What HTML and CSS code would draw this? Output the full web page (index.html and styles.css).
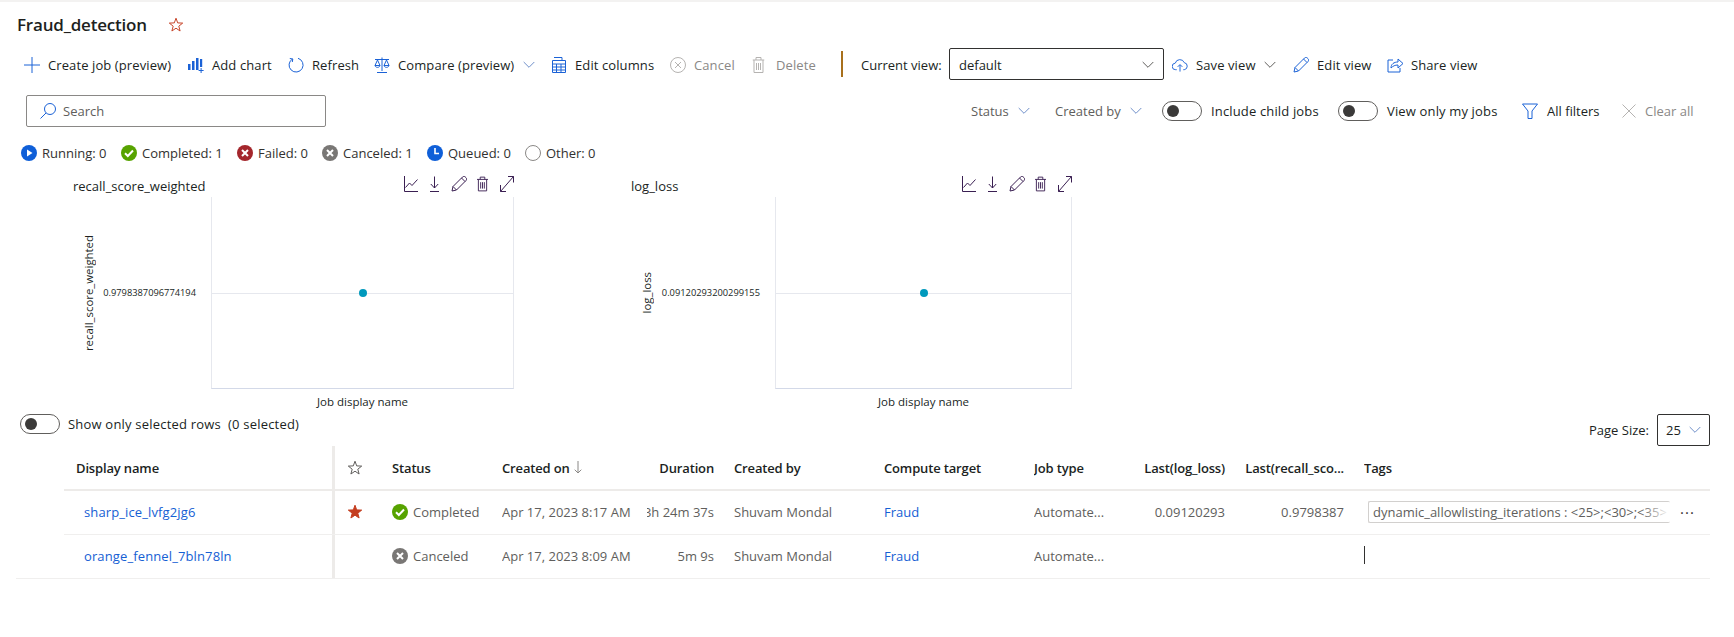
FILE: index.html
```html
<!DOCTYPE html>
<html lang="en">
<head>
<meta charset="utf-8">
<title>Fraud_detection</title>
<link rel="stylesheet" href="styles.css">
</head>
<body>
<svg class="defs" xmlns="http://www.w3.org/2000/svg">
  <symbol id="star" viewBox="0 0 16 16"><path d="M8 1.200l1.700 4.700 5 .2-3.900 3.100 1.300 4.800L8 11.200 3.900 14l1.300-4.800L1.300 6.100l5-.2z"/></symbol>
  <symbol id="chev" viewBox="0 0 12 8"><path d="M.7 1l5.300 5.300L11.300 1"/></symbol>
  <symbol id="i-line" viewBox="0 0 14 16"><path d="M.5 0v15.500H14"/><path d="M1.500 11.500l4-4.500 2.500 2.500 5.500-6"/></symbol>
  <symbol id="i-down" viewBox="0 0 9 16"><path d="M4.500 .5v11.500M.8 8L4.500 12 8.200 8M0 15.500h9"/></symbol>
  <symbol id="i-pencil" viewBox="0 0 16 16"><path d="M1 15l1-4.500L11.500 1c.8-.8 2-.8 2.800 0l.7.7c.8.8.8 2 0 2.800L5.500 14z"/><path d="M2 10.500L5.500 14M10.500 2l3.500 3.500"/></symbol>
  <symbol id="i-trash" viewBox="0 0 12 16"><path d="M0 3h12M3.500 3V.5h5V3M1.500 3v12.500h9V3M4 6v7M6 6v7M8 6v7"/></symbol>
  <symbol id="i-expand" viewBox="0 0 14 16"><path d="M.5 15.500l13-15M8 .5h5.500v6M.5 9v6.500H6"/></symbol>
</svg>

<div class="page">
  <header class="title-row">
    <h1 class="title">Fraud_detection</h1>
    <svg class="title-star"><use href="#star"/></svg>
  </header>

  <div class="toolbar">
    <button class="tb"><svg class="ic blue" viewBox="0 0 16 16"><path d="M8 0v16M0 8h16"/></svg>Create job (preview)</button>
    <button class="tb"><svg class="ic solid" viewBox="0 0 16 16"><path d="M0 7h2.500v6H0zM4 4h2.500v9H4zM8 1h2.500v12H8zM12 2h2.200v8H12z"/><path d="M12.600 11h1v2h2v1h-2v2h-1v-2h-2v-1h2z"/></svg>Add chart</button>
    <button class="tb"><svg class="ic blue" viewBox="0 0 16 16"><path d="M4.500 2A7 7 0 1 0 10 1.300"/><path d="M1.800 1.500L4.800 2l-.5 3"/></svg>Refresh</button>
    <button class="tb tb-menu"><svg class="ic blue" viewBox="0 0 16 16"><path d="M1 2.500h14M8 .5v13.500M3 15.500h10M3.500 3L1 8.500h5zM12.500 3L10 8.500h5zM1 8.500c.5 2.500 4.500 2.500 5 0M10 8.500c.5 2.500 4.500 2.500 5 0"/></svg>Compare (preview)<svg class="chev"><use href="#chev"/></svg></button>
    <button class="tb"><svg class="ic blue" viewBox="0 0 16 16"><path d="M1.500 3.500h13v12h-13zM1.500 7h13M1.500 10h13M1.500 13h13M5.500 7v8.500M10 7v8.500M3 .5h8v3"/></svg>Edit columns</button>
    <button class="tb off"><svg class="ic grey" viewBox="0 0 16 16"><circle cx="8" cy="8" r="7.500"/><path d="M5 5l6 6M11 5l-6 6"/></svg>Cancel</button>
    <button class="tb off"><svg class="ic grey narrow-ic" viewBox="0 0 12 16"><use href="#i-trash"/></svg>Delete</button>
    <span class="sep"></span>
    <label class="cv-label">Current view:</label>
    <div class="select view-select"><span>default</span><svg class="chev dark"><use href="#chev"/></svg></div>
    <button class="tb tb-save"><svg class="ic blue" viewBox="0 0 17 16"><path d="M5 13H4a3.500 3.500 0 0 1-.5-7A5 5 0 0 1 13 5.500 3.800 3.800 0 0 1 13 13h-1"/><path d="M8.500 15V8M6 10l2.500-2.500L11 10"/></svg>Save view<svg class="chev dark"><use href="#chev"/></svg></button>
    <button class="tb"><svg class="ic blue" viewBox="0 0 16 16"><use href="#i-pencil"/></svg>Edit view</button>
    <button class="tb"><svg class="ic blue" viewBox="0 0 16 16"><path d="M6 3H1v12h12v-4"/><path d="M4 11c0-4 3-6 7-6V2l5 4.500L11 11V8c-3 0-5 1-7 3z"/></svg>Share view</button>
  </div>

  <div class="filter-row">
    <div class="search">
      <svg class="ic blue" viewBox="0 0 16 16"><circle cx="10" cy="6" r="5.500"/><path d="M6 10l-5.500 5.500"/></svg>
      <span>Search</span>
    </div>
    <div class="filters">
      <span class="flt">Status<svg class="chev"><use href="#chev"/></svg></span>
      <span class="flt">Created by<svg class="chev"><use href="#chev"/></svg></span>
      <span class="tog-wrap"><span class="toggle"><i></i></span>Include child jobs</span>
      <span class="tog-wrap"><span class="toggle"><i></i></span>View only my jobs</span>
      <span class="flt"><svg class="ic blue" viewBox="0 0 16 16"><path d="M.5 1h15L10 8v7.500H6V8z"/></svg>All filters</span>
      <span class="flt off"><svg class="ic grey" viewBox="0 0 16 16"><path d="M1.500 1.500l13 13M14.500 1.500l-13 13"/></svg>Clear all</span>
    </div>
  </div>

  <div class="status-row">
    <span class="st"><svg class="si" viewBox="0 0 16 16"><circle cx="8" cy="8" r="8" fill="#0f5fd8"/><path d="M6 4.500v7L11.500 8z" fill="#fff"/></svg>Running: 0</span>
    <span class="st"><svg class="si" viewBox="0 0 16 16"><circle cx="8" cy="8" r="8" fill="#57a300"/><path d="M4 8.300l2.800 2.700L12 5.500" fill="none" stroke="#fff" stroke-width="2"/></svg>Completed: 1</span>
    <span class="st"><svg class="si" viewBox="0 0 16 16"><circle cx="8" cy="8" r="8" fill="#a4262c"/><path d="M5 5l6 6M11 5l-6 6" stroke="#fff" stroke-width="2"/></svg>Failed: 0</span>
    <span class="st"><svg class="si" viewBox="0 0 16 16"><circle cx="8" cy="8" r="8" fill="#797775"/><path d="M5 5l6 6M11 5l-6 6" stroke="#fff" stroke-width="2"/></svg>Canceled: 1</span>
    <span class="st"><svg class="si" viewBox="0 0 16 16"><circle cx="8" cy="8" r="8" fill="#0f5fd8"/><path d="M8 3v5.500h4" fill="none" stroke="#fff" stroke-width="1.600"/></svg>Queued: 0</span>
    <span class="st"><svg class="si" viewBox="0 0 16 16"><circle cx="8" cy="8" r="7.500" fill="none" stroke="#8a8886"/></svg>Other: 0</span>
  </div>

  <section class="charts">
    <article class="chart chart-a">
      <div class="chart-head">
        <span class="chart-title">recall_score_weighted</span>
        <div class="chart-tools">
          <svg class="t-line"><use href="#i-line"/></svg><svg class="t-down"><use href="#i-down"/></svg><svg class="t-pen"><use href="#i-pencil"/></svg><svg class="t-trash"><use href="#i-trash"/></svg><svg class="t-exp"><use href="#i-expand"/></svg>
        </div>
      </div>
      <div class="chart-body">
        <div class="y-title">recall_score_weighted</div>
        <div class="y-tick">0.9798387096774194</div>
        <div class="plot"><span class="dot"></span></div>
      </div>
      <div class="x-title">Job display name</div>
    </article>
    <article class="chart chart-b">
      <div class="chart-head">
        <span class="chart-title">log_loss</span>
        <div class="chart-tools">
          <svg class="t-line"><use href="#i-line"/></svg><svg class="t-down"><use href="#i-down"/></svg><svg class="t-pen"><use href="#i-pencil"/></svg><svg class="t-trash"><use href="#i-trash"/></svg><svg class="t-exp"><use href="#i-expand"/></svg>
        </div>
      </div>
      <div class="chart-body">
        <div class="y-title">log_loss</div>
        <div class="y-tick">0.09120293200299155</div>
        <div class="plot"><span class="dot"></span></div>
      </div>
      <div class="x-title">Job display name</div>
    </article>
  </section>

  <div class="table-bar">
    <span class="tog-wrap show-sel"><span class="toggle"><i></i></span>Show only selected rows&nbsp; (0 selected)</span>
    <div class="page-size">
      <span>Page Size:</span>
      <div class="select size-select"><span>25</span><svg class="chev"><use href="#chev"/></svg></div>
    </div>
  </div>

  <div class="table">
    <div class="row head">
      <div class="cell name-h">Display name</div>
      <div class="divider"></div>
      <div class="cell"><svg class="hstar"><use href="#star"/></svg></div>
      <div class="cell">Status</div>
      <div class="cell">Created on<svg class="sort" viewBox="0 0 8 13"><path d="M4 0v12M.7 8.700L4 12l3.300-3.300"/></svg></div>
      <div class="cell num">Duration</div>
      <div class="cell">Created by</div>
      <div class="cell">Compute target</div>
      <div class="cell">Job type</div>
      <div class="cell num">Last(log_loss)</div>
      <div class="cell num">Last(recall_sco...</div>
      <div class="cell">Tags</div>
    </div>
    <div class="row r1">
      <div class="cell name"><a href="#">sharp_ice_lvfg2jg6</a></div>
      <div class="divider"></div>
      <div class="cell"><svg class="fstar"><use href="#star"/></svg></div>
      <div class="cell stat"><svg class="si" viewBox="0 0 16 16"><circle cx="8" cy="8" r="8" fill="#57a300"/><path d="M4 8.300l2.800 2.700L12 5.500" fill="none" stroke="#fff" stroke-width="2"/></svg>Completed</div>
      <div class="cell">Apr 17, 2023 8:17 AM</div>
      <div class="cell num">3h 24m 37s</div>
      <div class="cell">Shuvam Mondal</div>
      <div class="cell"><a href="#">Fraud</a></div>
      <div class="cell">Automate...</div>
      <div class="cell num">0.09120293</div>
      <div class="cell num">0.9798387</div>
      <div class="cell tags"><span class="tag">dynamic_allowlisting_iterations : &lt;25&gt;;&lt;30&gt;;&lt;35&gt;</span><span class="more">···</span></div>
    </div>
    <div class="row r2 last">
      <div class="cell name"><a href="#">orange_fennel_7bln78ln</a></div>
      <div class="divider"></div>
      <div class="cell"></div>
      <div class="cell stat"><svg class="si" viewBox="0 0 16 16"><circle cx="8" cy="8" r="8" fill="#797775"/><path d="M5 5l6 6M11 5l-6 6" stroke="#fff" stroke-width="2"/></svg>Canceled</div>
      <div class="cell">Apr 17, 2023 8:09 AM</div>
      <div class="cell num">5m 9s</div>
      <div class="cell">Shuvam Mondal</div>
      <div class="cell"><a href="#">Fraud</a></div>
      <div class="cell">Automate...</div>
      <div class="cell num"></div>
      <div class="cell num"></div>
      <div class="cell tags"><span class="caret"></span></div>
    </div>
  </div>
</div>
</body>
</html>
```

FILE: styles.css
```css
* { box-sizing: border-box; }
html, body { margin: 0; height: 100%; background: #fff; overflow: hidden; }
body { font: 13px/18px "Open Sans", "Noto Sans", sans-serif; color: #201f1e; }
.defs { display: none; }
svg { display: block; flex: none; }

.page { border-top: 2px solid #f3f2f1; }

.title-row { height: 46px; padding-left: 17px; display: flex; align-items: center; }
.title { margin: 0; font-size: 17px; line-height: 24px; font-weight: 600; letter-spacing: -.2px; width: 151px; color: #201f1e; white-space: nowrap; }
.title-star { width: 16px; height: 16px; fill: none; stroke: #c8452a; stroke-width: 1; }

.ic { width: 16px; height: 16px; fill: none; stroke-width: 1; }
.narrow-ic { width: 13px; margin-right: 3px; }
.blue { stroke: #1b62d6; }
.grey { stroke: #b5b3b1; }
.solid { fill: #1b62d6; stroke: none; }
.chev { width: 12px; height: 8px; fill: none; stroke: #6f8fc9; stroke-width: 1; }
.chev.dark { stroke: #605e5c; }

.toolbar {
  height: 32px;
  padding-left: 24px;
  display: grid;
  grid-template-columns: 164px 100px 86px 177px 119px 82px 89px 20px 88px 223px 121px 94px auto;
  align-items: center;
}
.tb {
  all: unset;
  display: flex;
  align-items: center;
  gap: 8px;
  padding-top: 2px;
  font: inherit;
  letter-spacing: .1px;
  white-space: nowrap;
}
.tb-menu { padding-right: 16px; }
.tb-menu .chev, .tb-save .chev { margin-left: auto; }
.tb-save { padding-right: 17px; }
.off { color: #8a8886; }
.sep { width: 2px; height: 26px; background: #a8701c; }
.cv-label { white-space: nowrap; padding-top: 2px; }
.select {
  height: 32px;
  border: 1px solid #323130;
  border-radius: 2px;
  display: flex;
  align-items: center;
  justify-content: space-between;
}
.view-select { width: 215px; padding: 2px 9px 0; }

.filter-row { margin-top: 15px; height: 32px; display: flex; align-items: center; padding-left: 26px; }
.search {
  width: 300px;
  height: 32px;
  border: 1px solid #8a8886;
  border-radius: 2px;
  padding-left: 13px;
  display: flex;
  align-items: center;
  gap: 7px;
  color: #605e5c;
}
.filters {
  margin-left: 645px;
  display: grid;
  grid-template-columns: 84px 107px 176px 184px 99px auto;
  align-items: center;
  color: #3b3a39;
}
.flt { display: flex; align-items: center; gap: 9px; white-space: nowrap; color: #605e5c; }
.flt:nth-child(5) { color: #201f1e; }
.flt.off { color: #8a8886; gap: 8px; }
.tog-wrap { display: flex; align-items: center; gap: 9px; white-space: nowrap; color: #201f1e; letter-spacing: .15px; }
.toggle {
  width: 40px;
  height: 20px;
  border: 1px solid #605e5c;
  border-radius: 10px;
  padding-left: 4px;
  display: flex;
  align-items: center;
  flex: none;
}
.toggle i { width: 12px; height: 12px; border-radius: 50%; background: #3b3a39; }
.show-sel { gap: 8px; letter-spacing: .2px; }

.status-row {
  margin-top: 16px;
  height: 20px;
  padding-left: 21px;
  display: grid;
  grid-template-columns: 100px 116px 85px 105px 98px auto;
  align-items: center;
}
.st { display: flex; align-items: center; gap: 5px; white-space: nowrap; color: #323130; }
.si { width: 16px; height: 16px; }

.charts { margin-top: 13px; padding-left: 73px; display: flex; gap: 117px; }
.chart { width: 441px; }
.chart-head { height: 21px; display: flex; justify-content: space-between; }
.chart-title { line-height: 21px; }
.chart-tools { display: flex; height: 16px; }
.chart-tools svg { height: 16px; fill: none; stroke: #3a1f52; stroke-width: 1; }
.t-line { width: 14px; }
.t-down { width: 9px; margin-left: 12px; }
.t-pen { width: 16px; margin-left: 12px; }
.t-trash { width: 11px; margin-left: 10px; }
.t-exp { width: 14px; margin-left: 12px; }
.chart-body { display: grid; height: 192px; }
.chart-a .chart-body { grid-template-columns: 32px 106px 1fr; }
.chart-b .chart-body { grid-template-columns: 32px 112px 1fr; }
.y-title {
  writing-mode: vertical-rl;
  transform: rotate(180deg);
  justify-self: center;
  align-self: center;
  font-size: 11.400px;
  line-height: 14px;
  white-space: nowrap;
}
.y-tick { align-self: center; justify-self: end; padding-right: 15px; font-size: 9.300px; line-height: 12px; white-space: nowrap; }
.plot {
  position: relative;
  border: 1px solid #e6e8ee;
  border-top: 0;
  border-bottom: 1px solid #d3d9e8;
  display: grid;
  place-items: center;
}
.plot::before { content: ""; position: absolute; left: 0; right: 0; top: 96px; height: 1px; background: #e6e8ee; }
.dot { position: relative; width: 8px; height: 8px; border-radius: 50%; background: #0099bc; }
.x-title { height: 25px; font-size: 11.500px; line-height: 26px; text-align: center; }
.chart-a .x-title { padding-left: 138px; }
.chart-b .x-title { padding-left: 144px; }

.table-bar { height: 32px; padding: 0 24px 0 20px; display: flex; justify-content: space-between; align-items: flex-start; }
.page-size { display: flex; align-items: center; gap: 8px; }
.size-select { width: 53px; padding: 0 8px; }

.table { margin-left: 16px; margin-right: 24px; font-size: 13px; color: #605e5c; }
.row {
  margin-left: 48px;
  display: grid;
  grid-template-columns: 268px 3px 57px 110px 145px 87px 150px 150px 106px 105px 119px 1fr;
  border-bottom: 1px solid #f0efee;
}
.row.last { margin-left: 0; padding-left: 48px; }
.row.head { height: 45px; color: #201f1e; font-weight: 600; letter-spacing: -.15px; border-bottom: 2px solid #edebe9; }
.r1 { height: 44px; padding-bottom: 2px; }
.r2 { height: 44px; padding-bottom: 2px; }
.r1 .divider { margin-bottom: -2px; }
.r2 .divider { margin-bottom: -2px; }
.cell { display: flex; align-items: center; white-space: nowrap; overflow: hidden; }
.num { justify-content: flex-end; padding-right: 20px; }
.name-h { padding-left: 12px; }
.name { padding-left: 20px; letter-spacing: .12px; }
.divider { background: #edebe9; }
a { color: #1560d4; text-decoration: none; }
.hstar { width: 16px; height: 16px; margin-left: 12px; fill: none; stroke: #605e5c; }
.fstar { width: 16px; height: 16px; margin-left: 12px; fill: #c43d1f; stroke: #c43d1f; }
.stat { gap: 5px; }
.sort { width: 8px; height: 13px; margin-left: 4px; fill: none; stroke: #8a8886; stroke-width: 1; }
.tags { overflow: visible; }
.tag {
  position: relative;
  flex: none;
  width: 302px;
  height: 22px;
  margin-left: 4px;
  padding: 0 4px;
  border: 1px solid #d2d0ce;
  border-right: 0;
  border-radius: 2px;
  overflow: hidden;
  line-height: 20px;
  font-size: 13px;
  white-space: nowrap;
}
.tag::after { content: ""; position: absolute; top: 0; right: 0; bottom: 0; width: 30px; background: linear-gradient(90deg, rgba(255,255,255,0), #fff); }
.more { margin-left: 10px; font-size: 15px; letter-spacing: 1px; color: #323130; }
.caret { width: 1px; height: 18px; margin-top: -2px; background: #323130; }
```
